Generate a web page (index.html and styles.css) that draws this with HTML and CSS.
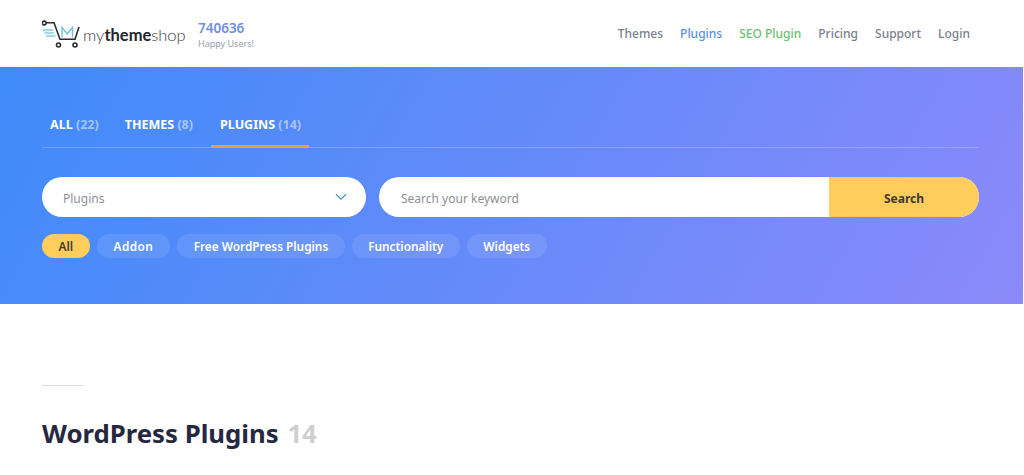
FILE: index.html
```html
<!DOCTYPE html>
<html lang="en">
<head>
    <meta charset="UTF-8">
    <meta name="viewport" content="width=device-width, initial-scale=1.0">
    <title>WordPress Plugins</title>
    <link rel="stylesheet" href="styles.css">
</head>
<body>
    <header class="site-header">
        <a class="logo" href="#">
            <svg class="logo-cart" width="41" height="32" viewBox="0 0 41 32" fill="none">
                <circle cx="2.2" cy="5" r="1.9" stroke="#2b2b33" stroke-width="1.6"/>
                <path d="M4.2 4.8H12L18 21.3H33L37 9" stroke="#2b2b33" stroke-width="1.6"/>
                <circle cx="16.5" cy="27" r="2" stroke="#2b2b33" stroke-width="1.6"/>
                <circle cx="33" cy="27" r="2" stroke="#2b2b33" stroke-width="1.6"/>
                <path d="M1 12H11M2.500 15H12M4 18H13.500" stroke="#7fd0df" stroke-width="1.4"/>
                <path d="M20 19.500V9.500L25.200 16L30.500 9.500V19.500" stroke="#6cc5d6" stroke-width="1.4"/>
            </svg>
            <span class="logo-text">my<b>theme</b>shop</span>
        </a>
        <div class="users">
            <div class="users-count">740636</div>
            <div class="users-label">Happy Users!</div>
        </div>
        <nav class="main-nav">
            <a href="#">Themes</a>
            <a href="#" class="nav-blue">Plugins</a>
            <a href="#" class="nav-green">SEO Plugin</a>
            <a href="#">Pricing</a>
            <a href="#">Support</a>
            <a href="#">Login</a>
        </nav>
    </header>

    <section class="hero">
        <div class="tabs">
            <a href="#" class="tab">ALL <span>(22)</span></a>
            <a href="#" class="tab">THEMES <span>(8)</span></a>
            <a href="#" class="tab active">PLUGINS <span>(14)</span></a>
        </div>

        <div class="search-row">
            <div class="select-box">
                <span>Plugins</span>
                <svg width="12" height="8" viewBox="0 0 12 8" fill="none">
                    <path d="M1 1.2L6 6.2L11 1.2" stroke="#4a8fe8" stroke-width="1.3"/>
                </svg>
            </div>
            <div class="search-box">
                <span class="search-text">Search your keyword</span>
                <button class="search-btn">Search</button>
            </div>
        </div>

        <div class="pills">
            <a href="#" class="pill active">All</a>
            <a href="#" class="pill pill-addon">Addon</a>
            <a href="#" class="pill">Free WordPress Plugins</a>
            <a href="#" class="pill">Functionality</a>
            <a href="#" class="pill">Widgets</a>
        </div>
    </section>

    <main class="content">
        <div class="rule"></div>
        <h1>WordPress Plugins <span>14</span></h1>
    </main>
</body>
</html>
```
FILE: styles.css
```css
* {
    box-sizing: border-box;
}
html, body {
    height: 475px;
    overflow: hidden;
}
body {
    margin: 0;
    background: #fff;
    font-family: "Noto Sans", "Open Sans", sans-serif;
}
a {
    text-decoration: none;
}

.site-header {
    height: 67px;
    display: flex;
    align-items: center;
    padding: 0 54px 0 42px;
}
.logo {
    display: flex;
    align-items: center;
    width: 156px;
}
.logo-text {
    font-family: "Lato", sans-serif;
    font-size: 16.5px;
    font-weight: 300;
    color: #3a3a42;
    margin-top: 2px;
}
.logo-text b {
    font-weight: 700;
    color: #24242c;
}
.users {
    padding-top: 2px;
}
.users-count {
    font-size: 13.5px;
    font-weight: 600;
    line-height: 18px;
    color: #6d8fe0;
}
.users-label {
    font-size: 9px;
    line-height: 13px;
    color: #9a9ea8;
}
.main-nav {
    margin-left: auto;
    display: flex;
    gap: 17px;
    font-size: 12px;
    font-weight: 500;
}
.main-nav a {
    color: #7a7f8c;
}
.main-nav .nav-blue {
    color: #5b8fde;
}
.main-nav .nav-green {
    color: #6cc070;
}

.hero {
    height: 237px;
    margin-right: 1px;
    padding: 42px 44px 0 42px;
    background: linear-gradient(120deg, #3e8bf9 0%, #8c89fa 100%);
}
.tabs {
    display: flex;
    height: 39px;
    border-bottom: 1px solid rgba(255, 255, 255, 0.2);
}
.tab {
    height: 39px;
    padding: 7px 9px 0;
    margin-right: 8px;
    font-size: 12.5px;
    font-weight: 700;
    line-height: 17px;
    color: #fff;
}
.tab:first-child {
    padding-left: 8px;
}
.tab span {
    color: rgba(255, 255, 255, 0.5);
}
.tab.active {
    margin-left: 1px;
    padding-right: 8px;
    border-bottom: 3px solid #e0a33e;
}

.search-row {
    display: flex;
    gap: 13px;
    margin-top: 29px;
}
.select-box {
    width: 324px;
    height: 40px;
    display: flex;
    align-items: center;
    justify-content: space-between;
    padding: 0 19px 0 21px;
    background: #fff;
    border-radius: 20px;
    font-size: 12px;
    color: #8b8f98;
}
.select-box span {
    padding-top: 2px;
}
.search-box {
    flex: 1;
    height: 40px;
    display: flex;
    align-items: center;
    background: #fff;
    border-radius: 20px;
    overflow: hidden;
}
.search-text {
    flex: 1;
    padding: 2px 0 0 22px;
    font-size: 12px;
    color: #8b8f98;
}
.search-btn {
    width: 150px;
    height: 40px;
    border: 0;
    padding: 2px 0 0;
    background: #ffcd5c;
    font-family: inherit;
    font-size: 12px;
    font-weight: 700;
    color: #3c3a30;
}

.pills {
    display: flex;
    gap: 7px;
    margin-top: 17px;
}
.pill {
    height: 24px;
    padding: 0 16.5px;
    border-radius: 12px;
    background: rgba(255, 255, 255, 0.1);
    font-size: 11.8px;
    font-weight: 600;
    line-height: 24px;
    color: #fff;
}
.pill-addon {
    padding: 0 17px;
    letter-spacing: 0.4px;
}
.pill.active {
    background: #ffcd5c;
    color: #3c3a30;
}

.content {
    padding: 81px 42px 0;
}
.rule {
    width: 42px;
    height: 1px;
    background: #dcdcdc;
}
h1 {
    margin: 23px 0 0;
    font-size: 25.75px;
    font-weight: 700;
    line-height: 48px;
    color: #262840;
}
h1 span {
    margin-left: 2px;
    color: #cfcfcf;
}
```
